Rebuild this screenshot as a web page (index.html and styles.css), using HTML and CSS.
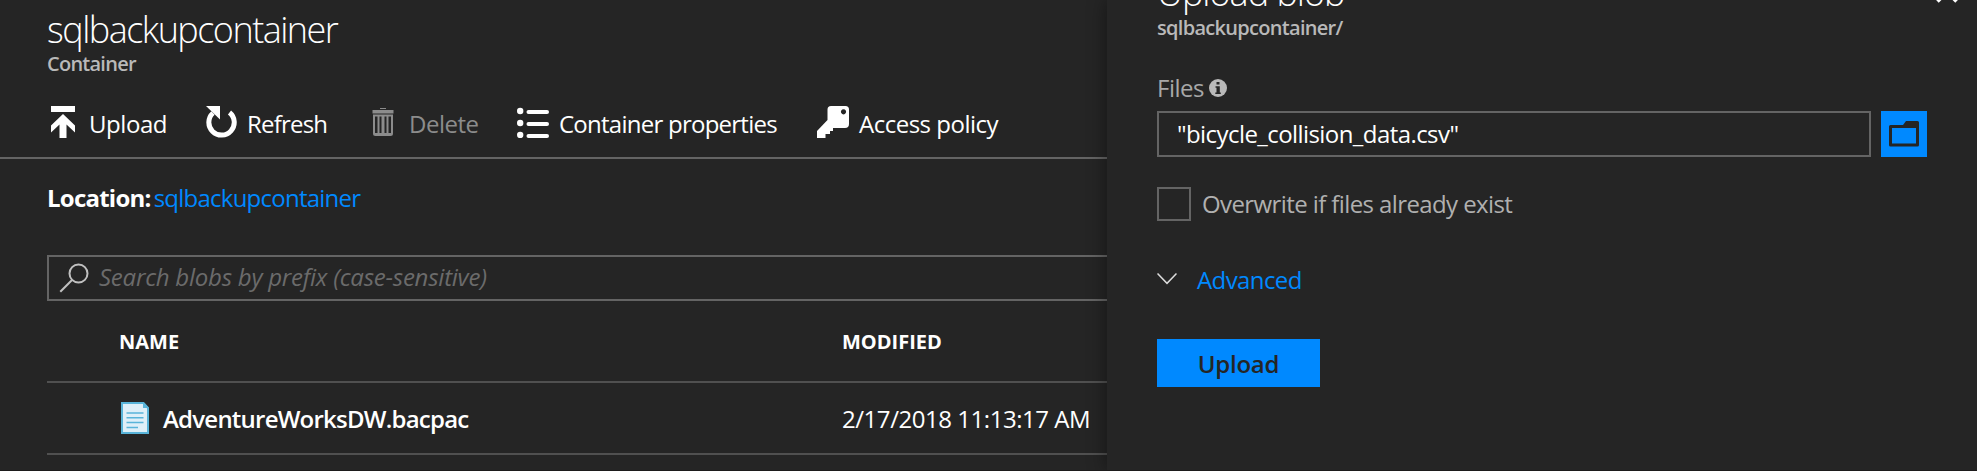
FILE: index.html
```
<!DOCTYPE html>
<html lang="en">
<head>
<meta charset="utf-8">
<title>sqlbackupcontainer</title>
<link rel="stylesheet" href="styles.css">
</head>
<body>
<div class="app">
  <main class="blade">
    <header class="heading">
      <h1 class="title title-container">sqlbackupcontainer</h1>
      <div class="subtitle">Container</div>
    </header>
    <nav class="toolbar">
      <div class="tool tool-upload">
        <svg class="icon" viewBox="0 0 32 32" fill="currentColor"><path d="M4 0h24v6H4zM16 8l12 11.500v7l-8.500-8V32h-7V18.500L4 26.500v-7z"/></svg>
        <span>Upload</span>
      </div>
      <div class="tool tool-refresh">
        <svg class="icon" viewBox="0 0 32 32"><path d="M24.500 6.500A12.700 12.700 0 1 1 8 7" fill="none" stroke="currentColor" stroke-width="5"/><path d="M1 0h14v13.500z" fill="currentColor"/></svg>
        <span>Refresh</span>
      </div>
      <div class="tool tool-delete">
        <svg class="icon" viewBox="0 0 32 32" fill="currentColor"><path d="M13 2h6v1h-6zM5.500 4h21v3.500h-21z"/><path fill-rule="evenodd" d="M6 8.500h20V27.500q0 2.500-2.500 2.500h-15Q6 30 6 27.500zM8 10.500V27h2.500V10.500zM12.500 10.500V27h2V10.500zM17.500 10.500V27h2V10.500zM21.500 10.500V27H24V10.500z"/></svg>
        <span>Delete</span>
      </div>
      <div class="tool tool-props">
        <svg class="icon" viewBox="0 0 32 32" fill="currentColor"><circle cx="3.200" cy="5" r="3.200"/><circle cx="3.200" cy="17" r="3.200"/><circle cx="3.200" cy="29" r="3.200"/><rect x="9.500" y="4" width="22.500" height="4" rx="2"/><rect x="9.500" y="16" width="22.500" height="4" rx="2"/><rect x="9.500" y="28" width="22.500" height="4" rx="2"/></svg>
        <span>Container properties</span>
      </div>
      <div class="tool tool-policy">
        <svg class="icon" viewBox="0 0 32 32" fill="currentColor"><path fill-rule="evenodd" d="M14 0h14.500Q32 0 32 3.500V18q0 4-4 4H16v3h-3v3H8.500v4H0v-7L10.500 14V3.500Q10.500 0 14 0zM26.500 3.200a2.600 2.600 0 1 0 .01 0z"/></svg>
        <span>Access policy</span>
      </div>
    </nav>
    <section class="content">
      <div class="location"><b class="location-label">Location:</b><a class="location-link">sqlbackupcontainer</a></div>
      <div class="search">
        <svg class="search-icon" viewBox="0 0 30 30" fill="none" stroke="currentColor" stroke-width="2"><circle cx="19.500" cy="10.500" r="9"/><path d="M1.300 28.700 13 17"/></svg>
        <span class="placeholder">Search blobs by prefix (case-sensitive)</span>
      </div>
      <div class="row row-head"><span>NAME</span><span>MODIFIED</span></div>
      <div class="row row-blob">
        <span class="blob">
          <svg class="doc-icon" viewBox="0 0 28 32"><path d="M1 1h21.500L27 6v25H1z" fill="#deeff8" stroke="#59b4d9" stroke-width="2"/><path d="M22 0l6 6h-6z" fill="#59b4d9"/><path d="M5.500 11h17M5.500 15.700h17M5.500 20.500h17M5.500 25.500H17" stroke="#59b4d9" stroke-width="1.500"/></svg>
          <span class="blob-name">AdventureWorksDW.bacpac</span>
        </span>
        <span class="modified">2/17/2018 11:13:17 AM</span>
      </div>
    </section>
  </main>
  <aside class="panel">
    <svg class="close" viewBox="0 0 24 24" stroke="currentColor" stroke-width="3.500"><path d="M2.500 2.500l19 19M21.500 2.500l-19 19"/></svg>
    <h2 class="title title-panel">Upload blob</h2>
    <div class="subtitle subtitle-panel">sqlbackupcontainer/</div>
    <div class="field-label"><span>Files</span>
      <svg class="info" viewBox="0 0 18 18"><circle cx="9" cy="9" r="9" fill="#b9b9b9"/><path d="M7.500 3h3v2.500h-3zM6.500 7.200h4.300V13.500h1v1.500H6.300v-1.500h1.200V8.700h-1z" fill="#252525"/></svg>
    </div>
    <div class="file-row">
      <div class="file-input">"bicycle_collision_data.csv"</div>
      <div class="browse"><svg class="folder" viewBox="0 0 30 26"><path fill="#252525" fill-rule="evenodd" d="M1.500 4H14l3-4h11.500Q30 0 30 1.500v22.500q0 1.500-1.500 1.500h-27Q0 25.500 0 24V5.500Q0 4 1.500 4zM3 7v15.500h24V7z"/></svg></div>
    </div>
    <div class="check-row"><span class="checkbox"></span><span>Overwrite if files already exist</span></div>
    <div class="advanced"><svg class="chevron" viewBox="0 0 20 12" fill="none" stroke="#dcdcdc" stroke-width="1.500"><path d="M.5.5 10 10.300 19.500.5"/></svg><span>Advanced</span></div>
    <div class="button">Upload</div>
  </aside>
</div>
</body>
</html>
```
FILE: styles.css
```
* { box-sizing: border-box; }
body {
  margin: 0;
  background: #252525;
  color: #fff;
  font: 24px/32px "Open Sans", "Noto Sans", sans-serif;
  white-space: nowrap;
}
svg { display: block; flex: none; }
.app { display: flex; height: 471px; overflow: hidden; border-bottom: 1px solid #1d1b1c; }
.blade { width: 1107px; flex: none; overflow: hidden; }
.heading { padding: 8px 0 0 47px; }
.title { margin: 0; font-size: 36px; line-height: 44px; font-weight: 300; }
.title-container { letter-spacing: -1.53px; }
.subtitle { font-size: 20px; line-height: 24px; font-weight: 600; color: #b9b9b9; letter-spacing: -.75px; }

.toolbar {
  display: grid;
  grid-template-columns: 158px 162px 150px 300px auto;
  height: 83px;
  padding: 30px 0 0 47px;
  border-bottom: 2px solid #646464;
}
.tool { display: flex; gap: 10px; line-height: 35px; }
.icon { width: 32px; height: 32px; }
.tool-upload { letter-spacing: -.45px; }
.tool-refresh { letter-spacing: -.8px; }
.tool-delete { letter-spacing: -.5px; color: #8c8c8c; }
.tool-props { letter-spacing: -.75px; }
.tool-policy { letter-spacing: -.5px; }

.content { padding: 22px 0 0 47px; }
.location { display: flex; gap: 3px; line-height: 34px; letter-spacing: -.76px; }
.location-label { font-weight: 700; }
.location-link { color: #0089ff; }
.search {
  display: flex;
  height: 46px;
  margin-top: 40px;
  padding: 6px 0 0 10px;
  gap: 10px;
  border: 2px solid #646464;
  border-right: 0;
}
.search-icon { width: 30px; height: 30px; color: #c0c0c0; }
.placeholder { font-style: italic; color: #6b6b6b; line-height: 28px; letter-spacing: -.24px; }
.row {
  display: grid;
  grid-template-columns: 723px auto;
  padding-left: 72px;
  border-bottom: 2px solid #505050;
}
.row-head { height: 82px; font-size: 20px; line-height: 81px; font-weight: 700; }
.row-blob { height: 72px; line-height: 72px; }
.blob { display: flex; padding-left: 2px; gap: 14px; }
.doc-icon { width: 28px; height: 32px; margin-top: 19px; }
.blob-name { font-weight: 600; letter-spacing: -.77px; }
.modified { letter-spacing: -.46px; }

.panel {
  position: relative;
  flex: 1;
  padding-left: 50px;
  background: #252525;
  box-shadow: 0 0 18px rgba(0, 0, 0, .45);
  color: #b0b0b0;
}
.close { position: absolute; top: -20px; left: 828px; width: 24px; height: 24px; color: #fff; }
.title-panel { margin-top: -29px; color: #fff; letter-spacing: -1px; }
.subtitle-panel { margin-top: 1px; letter-spacing: -.7px; }
.field-label { display: flex; align-items: center; gap: 5px; margin-top: 32px; letter-spacing: -.5px; color: #a8a8a8; }
.info { width: 18px; height: 18px; }
.file-row { display: flex; gap: 10px; margin-top: 7px; }
.file-input {
  width: 714px;
  height: 46px;
  padding-left: 18px;
  border: 2px solid #646464;
  color: #fff;
  line-height: 41px;
  letter-spacing: -.57px;
}
.browse { width: 46px; height: 46px; padding: 10px 8px; background: #0089ff; }
.folder { width: 30px; height: 26px; }
.check-row { display: flex; align-items: center; gap: 11px; margin-top: 30px; letter-spacing: -.6px; }
.checkbox { width: 34px; height: 34px; border: 2px solid #646464; }
.advanced { display: flex; gap: 20px; margin-top: 43px; color: #0089ff; letter-spacing: -.6px; }
.chevron { width: 20px; height: 12px; margin-top: 9px; }
.button {
  width: 163px;
  height: 48px;
  margin-top: 43px;
  background: #0089ff;
  color: #252525;
  font-weight: 600;
  line-height: 49px;
  text-align: center;
  letter-spacing: -.25px;
}
```
